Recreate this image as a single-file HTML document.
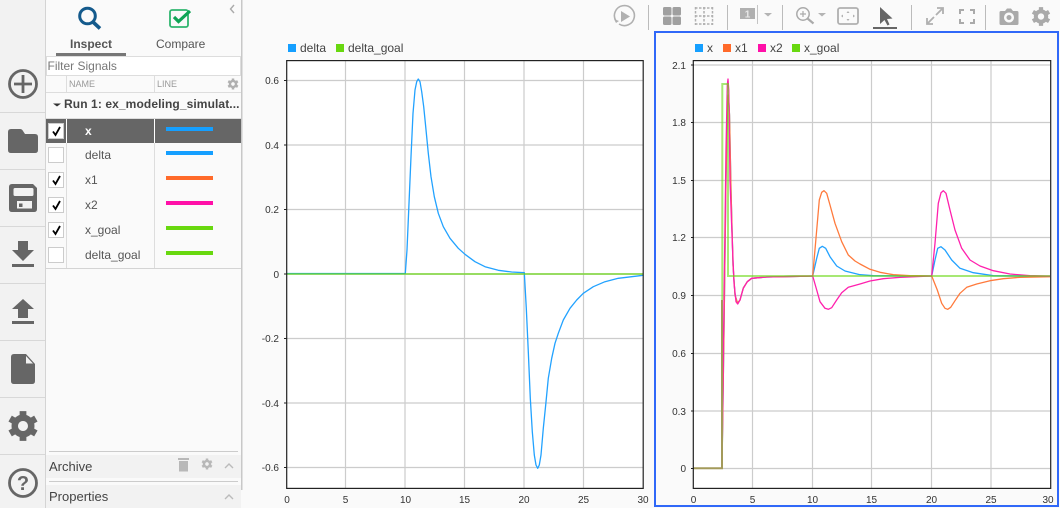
<!DOCTYPE html>
<html><head><meta charset="utf-8"><style>
html,body{margin:0;padding:0;width:1060px;height:508px;overflow:hidden;background:#fafafa}
svg{display:block}
text{font-family:"Liberation Sans",Arial,sans-serif;font-size:12px;fill:#555}
.t{font-size:10px;fill:#333}
.g line{stroke:#ccc;stroke-width:1.2}
.r{fill:#555}
.cb{fill:#fff;stroke:#ccc;stroke-width:1}
.ck{fill:none;stroke:#000;stroke-width:1.8}
.l{fill:none;stroke-width:1.3;stroke-linejoin:round}
.ti{fill:#999}
</style></head><body>
<svg width="1060" height="508" viewBox="0 0 1060 508" xmlns="http://www.w3.org/2000/svg">
<defs>
<g id="gear"><path d="M-2.5-11h5v4.5h-5zM-2.5 6.5h5v4.5h-5z"/><path transform="rotate(60)" d="M-2.5-11h5v4.5h-5zM-2.5 6.5h5v4.5h-5z"/><path transform="rotate(120)" d="M-2.5-11h5v4.5h-5zM-2.5 6.5h5v4.5h-5z"/><path fill-rule="evenodd" d="M0-8.500a8.500 8.500 0 1 0 .01 0zM0-3.700a3.700 3.700 0 1 1-.01 0z"/></g>
</defs>
<rect width="1060" height="508" fill="#fafafa"/>

<!-- left rail -->
<rect x="0" y="0" width="45" height="508" fill="#f2f2f2"/>
<rect x="45" y="0" width="1" height="508" fill="#d4d4d4"/>
<g fill="#d8d8d8"><rect y="112" width="45" height="1"/><rect y="169" width="45" height="1"/><rect y="226" width="45" height="1"/><rect y="283" width="45" height="1"/><rect y="340" width="45" height="1"/><rect y="397" width="45" height="1"/><rect y="454" width="45" height="1"/></g>
<circle cx="23" cy="84" r="13.500" fill="none" stroke="#666" stroke-width="2.800"/>
<path d="M23 75v18M14 84h18" stroke="#666" stroke-width="2.800" fill="none"/>
<path d="M8 132q0-3 3-3h9q2 0 3 2l2 3h10q3 0 3 3v13q0 3-3 3H11q-3 0-3-3z" fill="#666"/>
<path fill="#666" fill-rule="evenodd" d="M12 184h21l4 4v21q0 3-3 3H12q-3 0-3-3v-22q0-3 3-3zM15 188q-1.500 0-1.500 1.500v5q0 1.500 1.500 1.500h17q1.500 0 1.500-1.500v-5q0-1.500-1.500-1.500zM17 201v7.500h15V201zM19 203.500h3.500v3.500H19z"/>
<path fill="#666" d="M18 241h10v9h6l-11 11-11-11h6zM12 264h22v3H12z"/>
<path fill="#666" d="M23 299l11 10h-6v9H18v-9h-6zM12 321h22v3H12z"/>
<path fill="#666" d="M14 354h12l9 10v17q0 3-3 3H14q-3 0-3-3v-24q0-3 3-3z"/>
<path fill="#f2f2f2" d="M26 356v7.500h7z"/>
<use href="#gear" transform="translate(23 426) scale(1.350)" fill="#666"/>
<circle cx="23" cy="483" r="13.500" fill="none" stroke="#666" stroke-width="2.800"/>
<text x="23" y="490" text-anchor="middle" style="font-size:20px;font-weight:bold;fill:#666">?</text>

<!-- panel -->
<rect x="46" y="0" width="195" height="508" fill="#fafafa"/>
<rect x="241" y="0" width="1.500" height="490" fill="#c8c8c8"/>
<circle cx="87.500" cy="16" r="7.800" fill="none" stroke="#145a8c" stroke-width="3"/>
<path d="M93 22l7 6.500" stroke="#145a8c" stroke-width="3.600" fill="none"/>
<rect x="170" y="10" width="18" height="17" rx="2" fill="none" stroke="#2fb56f" stroke-width="1.800"/>
<path d="M174 17l4.500 4.500L190 11" fill="none" stroke="#0fa455" stroke-width="3.200"/>
<path d="M234 5l-3.500 4 3.500 4" fill="none" stroke="#aaa" stroke-width="1.400"/>
<text x="70" y="48" style="font-weight:bold;fill:#555">Inspect</text>
<text x="156" y="48" class="r">Compare</text>
<rect x="56" y="53" width="70" height="3" fill="#777"/>
<rect x="46.500" y="56.500" width="194" height="19" fill="#fff" stroke="#ddd"/>
<text x="47.500" y="70" style="fill:#777">Filter Signals</text>
<rect x="46" y="92" width="195" height="1" fill="#ddd"/>
<rect x="46" y="118" width="195" height="1" fill="#ddd"/>
<rect x="46" y="268" width="195" height="1" fill="#d4d4d4"/>
<rect x="66" y="76" width="1" height="17" fill="#ddd"/>
<rect x="154" y="76" width="1" height="17" fill="#ddd"/>
<rect x="66" y="119" width="1" height="149" fill="#ddd"/>
<rect x="154" y="119" width="1" height="149" fill="#ddd"/>
<text x="69" y="87" style="font-size:9px;fill:#999">NAME</text>
<text x="157" y="87" style="font-size:9px;fill:#999">LINE</text>
<use href="#gear" transform="translate(233 84) scale(.5)" fill="#b0b0b0"/>
<path d="M53 103.500h8l-4 3z" fill="#333"/>
<text x="64" y="108" style="font-weight:bold;fill:#444;letter-spacing:.1px">Run 1: ex_modeling_simulat...</text>
<rect x="46" y="119" width="195" height="24" fill="#666"/>
<rect x="66" y="119" width="1" height="24" fill="#fff"/>
<rect x="154" y="119" width="1" height="24" fill="#fff"/>
<rect class="cb" x="48.500" y="123.500" width="15" height="15"/>
<rect class="cb" x="48.500" y="147.500" width="15" height="15"/>
<rect class="cb" x="48.500" y="172.500" width="15" height="15"/>
<rect class="cb" x="48.500" y="197.500" width="15" height="15"/>
<rect class="cb" x="48.500" y="222.500" width="15" height="15"/>
<rect class="cb" x="48.500" y="247.500" width="15" height="15"/>
<path class="ck" d="M53 131.500l2.500 3.500 4.500-8"/>
<path class="ck" d="M53 180.500l2.500 3.500 4.500-8"/>
<path class="ck" d="M53 205.500l2.500 3.500 4.500-8"/>
<path class="ck" d="M53 230.500l2.500 3.500 4.500-8"/>
<text x="85" y="135" style="font-weight:bold;fill:#fff">x</text>
<text x="85" y="159" class="r">delta</text>
<text x="85" y="184" class="r">x1</text>
<text x="85" y="209" class="r">x2</text>
<text x="85" y="234" class="r">x_goal</text>
<text x="85" y="259" class="r">delta_goal</text>
<rect x="166" y="127" width="47" height="4" fill="#159fff"/>
<rect x="166" y="151" width="47" height="4" fill="#159fff"/>
<rect x="166" y="176" width="47" height="4" fill="#ff6a2a"/>
<rect x="166" y="201" width="47" height="4" fill="#ff10a8"/>
<rect x="166" y="226" width="47" height="4" fill="#68d80f"/>
<rect x="166" y="251" width="47" height="4" fill="#68d80f"/>

<rect x="46" y="455" width="195" height="23" fill="#f2f2f2"/>
<rect x="46" y="485" width="195" height="23" fill="#f2f2f2"/>
<rect x="49" y="451" width="189" height="1" fill="#ccc"/>
<rect x="49" y="481" width="189" height="1" fill="#ccc"/>
<text x="49" y="471" style="font-size:13px;fill:#444">Archive</text>
<text x="49" y="501" style="font-size:13px;fill:#444">Properties</text>
<path d="M178 458h11v2h-11zM179 461h9v10.500h-9z" fill="#b8b8b8"/>
<use href="#gear" transform="translate(207 464) scale(.5)" fill="#b8b8b8"/>
<path d="M225 468l4-4 4 4M225 499l4-4 4 4" fill="none" stroke="#bbb" stroke-width="1.400"/>

<!-- toolbar -->
<g fill="#bbb"><rect x="648" y="5" width="1" height="25"/><rect x="727" y="5" width="1" height="25"/><rect x="782" y="5" width="1" height="25"/><rect x="911" y="5" width="1" height="25"/><rect x="985" y="5" width="1" height="25"/></g>
<path d="M616 21a10 10 0 1 1 3 3" fill="none" stroke="#b0b0b0" stroke-width="1.600"/>
<path d="M621 11l9 5.500-9 5.500z" fill="#b0b0b0"/><path d="M614 19l2 4 3-2z" fill="#b0b0b0"/>
<g fill="#a0a0a0"><rect x="663" y="7" width="8.500" height="8.500" rx="1.500"/><rect x="672.500" y="7" width="8.500" height="8.500" rx="1.500"/><rect x="663" y="16.500" width="8.500" height="8.500" rx="1.500"/><rect x="672.500" y="16.500" width="8.500" height="8.500" rx="1.500"/></g>
<path d="M695 8h18M695 24h18M695 16h18M704 7v18M695.500 7v18M712.500 7v18" stroke="#b0b0b0" stroke-width="1.500" stroke-dasharray="2.500 1.500" fill="none"/>
<rect x="740" y="8" width="15" height="11" fill="#b0b0b0"/>
<text x="747.500" y="17.500" text-anchor="middle" style="font-size:10px;font-weight:bold;fill:#e8e8e8">1</text>
<rect x="757" y="5" width="1" height="19" fill="#c4c4c4"/>
<path d="M764 13h8l-4 3.500zM818 13h8l-4 3.500z" fill="#b4b4b4"/>
<circle cx="803" cy="14" r="6.200" fill="none" stroke="#aaa" stroke-width="1.500"/>
<path d="M800 14h6M803 11v6" stroke="#aaa" stroke-width="1.200" fill="none"/>
<path d="M807.500 18.500l6 5" stroke="#aaa" stroke-width="2.200" fill="none"/>
<rect x="838" y="8" width="20" height="16" rx="2" fill="none" stroke="#b0b0b0" stroke-width="1.800"/>
<path d="M848 11l-1.500 2h3zM848 21l-1.500-2h3zM841 16l2-1.500v3zM855 16l-2-1.500v3z" fill="#b0b0b0"/>
<path d="M880 7v17l4.500-4 3 5.500 2-1-2.500-5.500 5.500-.5z" fill="#666"/>
<rect x="873" y="27" width="24" height="2" fill="#666"/>
<path d="M927 24l7-7M936 15l7-7M937 8h6v6M927 18v6h6" fill="none" stroke="#b0b0b0" stroke-width="1.800"/>
<path d="M960 14v-4h4M970 10h4v4M974 19v4h-4M964 23h-4v-4" fill="none" stroke="#aaa" stroke-width="2"/>
<path fill-rule="evenodd" fill="#aaa" d="M1001 11h4l2-2.500h4l2 2.500h4q1.500 0 1.500 1.500v11q0 1.500-1.500 1.500h-16q-1.500 0-1.500-1.500v-11q0-1.500 1.500-1.500zM1009 12.500a5 5 0 1 0 .01 0zM1009 15a2.500 2.500 0 1 1-.01 0z"/>
<use href="#gear" transform="translate(1041 16.500) scale(.85)" fill="#aaa"/>

<!-- left plot -->
<rect x="287" y="61" width="356" height="427" fill="#fff"/>
<g class="g"><line x1="345.500" y1="61" x2="345.500" y2="488"/><line x1="405" y1="61" x2="405" y2="488"/><line x1="464.500" y1="61" x2="464.500" y2="488"/><line x1="524" y1="61" x2="524" y2="488"/><line x1="583.500" y1="61" x2="583.500" y2="488"/>
<line x1="287" y1="80.500" x2="643" y2="80.500"/><line x1="287" y1="145" x2="643" y2="145"/><line x1="287" y1="209.500" x2="643" y2="209.500"/><line x1="287" y1="274" x2="643" y2="274"/><line x1="287" y1="338.500" x2="643" y2="338.500"/><line x1="287" y1="403" x2="643" y2="403"/><line x1="287" y1="467.500" x2="643" y2="467.500"/></g>
<polyline class="l" stroke="#22a2ff" points="287,273.500 405.300,273.500 407,250 409,203.300 411,156.700 413,113.300 415,90 416.700,81.700 418.300,79 420,81.700 421.700,91.700 423.700,106.700 425.700,126.700 428.300,153.300 431,176.700 434.300,196.700 438.300,213.300 443.300,226.700 450,238.300 458.300,248.300 465,254.300 475,261.700 485,266.700 498.300,270.300 511.700,272 524.300,272.700 526.300,308.300 528.300,351.700 530.300,398.300 532.300,431.700 534.300,455 536,465 537.700,468.300 539.300,465 541,455 543.300,428.300 545.700,405 548.300,378.300 551.700,358.300 555,343.300 558.300,333.300 563.300,320 570,308.300 576.700,300 583.300,293.300 593.300,286.700 605,281.700 618.300,278.300 631.700,276.700 643,275.300"/>
<line x1="287" y1="274" x2="643" y2="274" stroke="#68d80f" stroke-opacity=".6" stroke-width="2"/>
<rect x="286.700" y="60.600" width="356.500" height="427.800" fill="none" stroke="#222" stroke-width="1.200"/>
<g stroke="#222" stroke-width="1"><line x1="284" y1="80.500" x2="287" y2="80.500"/><line x1="284" y1="145" x2="287" y2="145"/><line x1="284" y1="209.500" x2="287" y2="209.500"/><line x1="284" y1="274" x2="287" y2="274"/><line x1="284" y1="338.500" x2="287" y2="338.500"/><line x1="284" y1="403" x2="287" y2="403"/><line x1="284" y1="467.500" x2="287" y2="467.500"/></g>
<g class="t" text-anchor="end"><text class="t" x="279" y="84">0.6</text><text class="t" x="279" y="149">0.4</text><text class="t" x="279" y="213">0.2</text><text class="t" x="279" y="278">0</text><text class="t" x="279" y="342">-0.2</text><text class="t" x="279" y="407">-0.4</text><text class="t" x="279" y="471">-0.6</text></g>
<g text-anchor="middle"><text class="t" x="287" y="503">0</text><text class="t" x="345.500" y="503">5</text><text class="t" x="405.500" y="503">10</text><text class="t" x="464.500" y="503">15</text><text class="t" x="524" y="503">20</text><text class="t" x="583.500" y="503">25</text><text class="t" x="643" y="503">30</text></g>
<rect x="288" y="44" width="8" height="8" fill="#159fff"/><text x="300" y="52" style="fill:#444">delta</text>
<rect x="336" y="44" width="8" height="8" fill="#68d80f"/><text x="348" y="52" style="fill:#444">delta_goal</text>

<!-- right plot -->
<rect x="655" y="32" width="403" height="474" fill="none" stroke="#3068f8" stroke-width="2"/>
<rect x="693.500" y="61" width="357" height="427" fill="#fff"/>
<g class="g"><line x1="752.500" y1="61" x2="752.500" y2="488"/><line x1="812.500" y1="61" x2="812.500" y2="488"/><line x1="871.500" y1="61" x2="871.500" y2="488"/><line x1="931.500" y1="61" x2="931.500" y2="488"/><line x1="991" y1="61" x2="991" y2="488"/>
<line x1="693" y1="65" x2="1050" y2="65"/><line x1="693" y1="122.500" x2="1050" y2="122.500"/><line x1="693" y1="180.500" x2="1050" y2="180.500"/><line x1="693" y1="237.500" x2="1050" y2="237.500"/><line x1="693" y1="295.500" x2="1050" y2="295.500"/><line x1="693" y1="353.500" x2="1050" y2="353.500"/><line x1="693" y1="411" x2="1050" y2="411"/><line x1="693" y1="468.500" x2="1050" y2="468.500"/></g>
<polyline class="l" stroke="#22a2ff" points="722,468 724,330 726,180 727.500,105 728.500,95 729.500,115 731,190 733,265 735,295 737.500,303 740,300 743.300,288 747.300,281.700 751.700,278.300 766.700,277 800,276.300 812.700,276 816.700,258.300 819.300,248.300 822.300,246.300 825.700,248.300 830,256.700 836.700,266 845,271 860,274.700 873.300,275.700 931.700,276 935,260 937.700,248.300 941,246.700 945,250 951.700,260 960,268.300 973.300,272.700 993.300,275.700 1050,276.300"/>
<polyline class="l" stroke="#ff7a3c" points="722,468 724,330 726,180 727.500,105 728.500,95 729.500,115 731,190 733,265 735,295 737.500,303 740,300 743.300,288 747.300,281.700 751.700,278.300 766.700,277 800,276.300 812.700,276 816.700,230 819.300,200 821.700,192.300 824,190.700 826.700,193.300 830,205 835,223.300 841.700,241.700 848.300,255 855,261 860,264 870,269.300 880,272.300 893.300,274.700 910,275.700 931.700,276 937.300,290 941.700,303.300 945,308.300 947.700,309.300 950.700,307.300 955,300.700 960,293.300 966.700,287.300 976.700,284 990,280.700 1003.300,278.700 1020,277.300 1050,276.700"/>
<polyline class="l" stroke="#ff20ad" points="722,468 724,300 726,150 727.300,85 728,79 728.800,90 730,180 732,235 734,283 736,301.700 737.700,304 740,300 743.300,288.300 747.300,281.700 751.700,278.300 766.700,277 800,276.300 812.700,276 816.700,290 820,301.700 825,308.300 828.300,309.300 831.700,307.700 836.700,300 841.700,292.700 848.300,287.300 860,284 870,281 883.300,278.700 900,277.300 931.700,276 935,243.300 938.300,203.300 941,192.700 943.300,190.700 946,193.300 950,210 955,230 961.700,248.300 970,260 980,266 993.300,270.700 1010,274 1030,275.700 1050,276.300"/>
<polyline fill="none" stroke="#68d80f" stroke-opacity=".58" stroke-width="2" points="722.300,300 722.300,84 728,84 728,276 1050,276"/>
<polyline fill="none" stroke="#a39a5a" stroke-width="2" points="693,468.300 722,468.300 722,300"/>
<rect x="693.300" y="60.600" width="357.400" height="427.800" fill="none" stroke="#222" stroke-width="1.200"/>
<g stroke="#222" stroke-width="1"><line x1="691" y1="65" x2="694" y2="65"/><line x1="691" y1="122.500" x2="694" y2="122.500"/><line x1="691" y1="180.500" x2="694" y2="180.500"/><line x1="691" y1="237.500" x2="694" y2="237.500"/><line x1="691" y1="295.500" x2="694" y2="295.500"/><line x1="691" y1="353.500" x2="694" y2="353.500"/><line x1="691" y1="411" x2="694" y2="411"/><line x1="691" y1="468.500" x2="694" y2="468.500"/></g>
<g text-anchor="end"><text class="t" x="686" y="69">2.1</text><text class="t" x="686" y="126">1.8</text><text class="t" x="686" y="184">1.5</text><text class="t" x="686" y="241">1.2</text><text class="t" x="686" y="299">0.9</text><text class="t" x="686" y="357">0.6</text><text class="t" x="686" y="415">0.3</text><text class="t" x="686" y="472">0</text></g>
<g text-anchor="middle"><text class="t" x="693.500" y="503">0</text><text class="t" x="752.500" y="503">5</text><text class="t" x="812.500" y="503">10</text><text class="t" x="871.500" y="503">15</text><text class="t" x="931.500" y="503">20</text><text class="t" x="991" y="503">25</text><text class="t" x="1048" y="503">30</text></g>
<rect x="695" y="44" width="8" height="8" fill="#159fff"/><text x="707" y="52" style="fill:#444">x</text>
<rect x="723" y="44" width="8" height="8" fill="#ff6a2a"/><text x="735" y="52" style="fill:#444">x1</text>
<rect x="758" y="44" width="8" height="8" fill="#ff10a8"/><text x="770" y="52" style="fill:#444">x2</text>
<rect x="792" y="44" width="8" height="8" fill="#68d80f"/><text x="804" y="52" style="fill:#444">x_goal</text>
</svg>
</body></html>
